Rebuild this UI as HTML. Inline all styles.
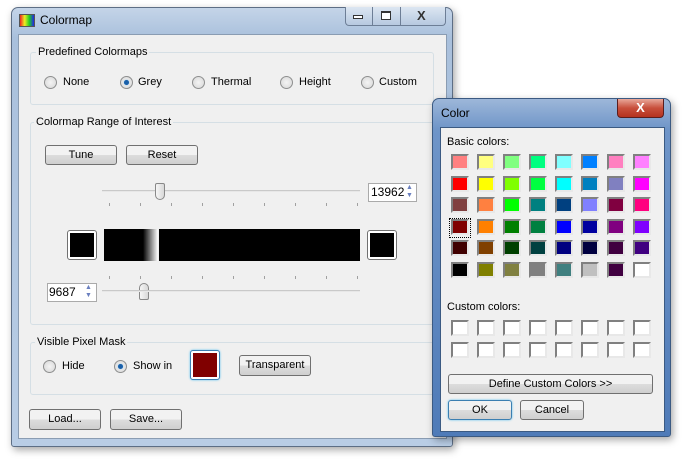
<!DOCTYPE html>
<html><head><style>
*{box-sizing:border-box}
body{margin:0;width:691px;height:459px;background:#fff;font-family:"Liberation Sans",sans-serif;font-size:11px;color:#000;position:relative;overflow:hidden}
.a{position:absolute}
.win{left:11px;top:7px;width:442px;height:440px;border:1px solid #5d6e85;border-radius:7px 7px 3px 3px;background:linear-gradient(#c4d4e8,#a9c0dc 30px,#b9cde5);box-shadow:2px 3px 8px rgba(0,0,0,.35)}
.client{background:#f0f0f0;border:1px solid #8a9cb2}
.gb{border:1px solid #d5dfe5;border-radius:3px}
.lbl{background:#f0f0f0;padding:0 2px;line-height:14px}
.btn{border:1px solid #707070;border-radius:3px;background:linear-gradient(#f2f2f2 50%,#dddddd 50%,#cfcfcf);text-align:center;line-height:18px}
.rad{width:13px;height:13px;border-radius:50%;border:1px solid #8e8f8f;background:radial-gradient(#f4f4f4,#d6d6d6)}
.rad.on::after{content:"";position:absolute;left:3px;top:3px;width:5px;height:5px;border-radius:50%;background:#1a5fa8;box-shadow:0 0 1px #4ab0ff}
.sw{width:18px;height:16px;border:2px solid #808080;border-right-color:#e8e8e8;border-bottom-color:#e8e8e8}
.spin{background:#fff;border:1px solid #aaa;font-size:12px;line-height:16px}
</style></head><body>
<div class="a win"></div>
<div class="a" style="left:19px;top:14px;width:16px;height:13px;background:linear-gradient(90deg,#e22,#ee2,#2c2,#22e);border:1px solid #555"></div>
<div class="a" style="left:40px;top:13px;font-size:12px">Colormap</div>
<div class="a" style="left:345px;top:7px;width:101px;height:19px;border:1px solid #6d7e96;border-top:none;border-radius:0 0 4px 4px;background:linear-gradient(#dce6f2,#b7c9e0)"></div>
<div class="a" style="left:372px;top:7px;width:1px;height:19px;background:#6d7e96"></div>
<div class="a" style="left:400px;top:7px;width:1px;height:19px;background:#6d7e96"></div>
<div class="a" style="left:353px;top:15px;width:10px;height:4px;border:1px solid #333;background:#fff"></div>
<div class="a" style="left:381px;top:11px;width:10px;height:9px;border:1px solid #333;border-top-width:2px;background:#fff"></div>
<div class="a" style="left:417px;top:8px;font-size:13px;font-weight:bold;color:#333">X</div>
<div class="a client" style="left:18px;top:34px;width:429px;height:405px"></div>

<div class="a gb" style="left:30px;top:52px;width:404px;height:53px"></div>
<div class="a lbl" style="left:36px;top:45px">Predefined Colormaps</div>
<div class="a rad" style="left:44px;top:76px"></div><div class="a" style="left:63px;top:76px">None</div>
<div class="a rad on" style="left:120px;top:76px"></div><div class="a" style="left:138px;top:76px">Grey</div>
<div class="a rad" style="left:192px;top:76px"></div><div class="a" style="left:211px;top:76px">Thermal</div>
<div class="a rad" style="left:280px;top:76px"></div><div class="a" style="left:299px;top:76px">Height</div>
<div class="a rad" style="left:361px;top:76px"></div><div class="a" style="left:379px;top:76px">Custom</div>

<div class="a gb" style="left:30px;top:122px;width:410px;height:203px"></div>
<div class="a lbl" style="left:34px;top:115px">Colormap Range of Interest</div>
<div class="a btn" style="left:45px;top:145px;width:72px;height:20px">Tune</div>
<div class="a btn" style="left:126px;top:145px;width:72px;height:20px">Reset</div>
<div class="a" style="left:102px;top:190px;width:258px;height:2px;background:#c9c9c9;border-bottom:1px solid #e7e7e7"></div>
<div class="a" style="left:155px;top:183px;width:10px;height:17px;border:1px solid #888;border-radius:2px 2px 5px 5px;background:linear-gradient(90deg,#f6f6f6,#d8d8d8)"></div>
<div class="a" style="left:139px;top:283px;width:10px;height:17px;border:1px solid #888;border-radius:5px 5px 2px 2px;background:linear-gradient(90deg,#f6f6f6,#d8d8d8)"></div>
<div class="a" style="left:102px;top:290px;width:258px;height:2px;background:#c9c9c9;border-bottom:1px solid #e7e7e7"></div>
<div class="a spin" style="left:368px;top:183px;width:49px;height:19px;padding-left:2px">13962</div>
<div class="a spin" style="left:47px;top:283px;width:50px;height:19px;padding-left:1px">9687</div>
<div class="a" style="left:403px;top:184px;width:13px;height:17px;font-size:7px;line-height:8px;color:#6a7fbf;text-align:center">▲<br>▼</div>
<div class="a" style="left:82px;top:284px;width:13px;height:17px;font-size:7px;line-height:8px;color:#6a7fbf;text-align:center">▲<br>▼</div>
<div class="a" style="left:104px;top:229px;width:256px;height:32px;background:linear-gradient(90deg,#000 0,#000 39px,#fff 54px,#f0f0f0 54px,#f0f0f0 55px,#000 55px)"></div>
<div class="a" style="left:67px;top:230px;width:30px;height:30px;border:1px solid #707070;border-radius:3px;background:#fff;padding:2px"><div style="width:100%;height:100%;background:#000"></div></div>
<div class="a" style="left:367px;top:230px;width:30px;height:30px;border:1px solid #707070;border-radius:3px;background:#fff;padding:2px"><div style="width:100%;height:100%;background:#000"></div></div>

<div class="a gb" style="left:30px;top:342px;width:410px;height:53px"></div>
<div class="a lbl" style="left:35px;top:335px">Visible Pixel Mask</div>
<div class="a rad" style="left:43px;top:360px"></div><div class="a" style="left:62px;top:360px">Hide</div>
<div class="a rad on" style="left:114px;top:360px"></div><div class="a" style="left:133px;top:360px">Show in</div>
<div class="a" style="left:190px;top:350px;width:30px;height:30px;border:1px solid #3c7fb1;border-radius:3px;background:#fff;padding:2px;box-shadow:0 0 2px #5bc0f0"><div style="width:100%;height:100%;background:#800000"></div></div>
<div class="a btn" style="left:239px;top:355px;width:72px;height:21px">Transparent</div>
<div class="a btn" style="left:29px;top:409px;width:72px;height:21px">Load...</div>
<div class="a btn" style="left:110px;top:409px;width:72px;height:21px">Save...</div>

<div class="a" style="left:432px;top:98px;width:239px;height:339px;border:1px solid #3b5a82;border-radius:7px 7px 3px 3px;background:linear-gradient(#9db7d9,#6f95c8 30px,#4f7bb8);box-shadow:2px 3px 8px rgba(0,0,0,.35)"></div>
<div class="a" style="left:441px;top:106px;font-size:12px">Color</div>
<div class="a" style="left:617px;top:99px;width:47px;height:19px;border:1px solid #5a1e1e;border-top:none;border-radius:0 0 4px 4px;background:linear-gradient(#e9a89a,#c8503c 50%,#b5321f);color:#fff;font-weight:bold;font-size:13px;text-align:center;line-height:18px">X</div>
<div class="a client" style="left:440px;top:127px;width:225px;height:305px;border-color:#3b5a82"></div>
<div class="a" style="left:447px;top:136px">Basic colors:</div>
<div id="g"></div>
<div class="a" style="left:447px;top:301px">Custom colors:</div>
<div class="a btn" style="left:448px;top:374px;width:205px;height:20px">Define Custom Colors &gt;&gt;</div>
<div class="a btn" style="left:448px;top:400px;width:64px;height:20px;border-color:#3c7fb1;box-shadow:0 0 2px #5bc0f0">OK</div>
<div class="a btn" style="left:520px;top:400px;width:64px;height:20px">Cancel</div>
<script>
var c=["#ff8080","#ffff80","#80ff80","#00ff80","#80ffff","#0080ff","#ff80c0","#ff80ff","#ff0000","#ffff00","#80ff00","#00ff40","#00ffff","#0080c0","#8080c0","#ff00ff","#804040","#ff8040","#00ff00","#008080","#004080","#8080ff","#800040","#ff0080","#800000","#ff8000","#008000","#008040","#0000ff","#0000a0","#800080","#8000ff","#400000","#804000","#004000","#004040","#000080","#000040","#400040","#400080","#000000","#808000","#808040","#808080","#408080","#c0c0c0","#400040","#ffffff"];
var h="";
for(var i=0;i<48;i++){var r=Math.floor(i/8),k=i%8;h+='<div class="a sw" style="left:'+(451+k*26)+'px;top:'+(154+r*21.6)+'px;background:'+c[i]+'"></div>';}
for(var i=0;i<16;i++){var r=Math.floor(i/8),k=i%8;h+='<div class="a sw" style="left:'+(451+k*26)+'px;top:'+(320+r*22)+'px;background:#fff"></div>';}
h+='<div class="a" style="left:449px;top:218px;width:22px;height:20px;border:1px dotted #000"></div>';
document.getElementById("g").innerHTML=h;
</script>
<div class="a" style="left:109px;top:203px;width:250px;height:3px;background:repeating-linear-gradient(90deg,#a0a0a0 0 1px,transparent 1px 31px)"></div>
<div class="a" style="left:109px;top:276px;width:250px;height:3px;background:repeating-linear-gradient(90deg,#a0a0a0 0 1px,transparent 1px 31px)"></div>
</body></html>
